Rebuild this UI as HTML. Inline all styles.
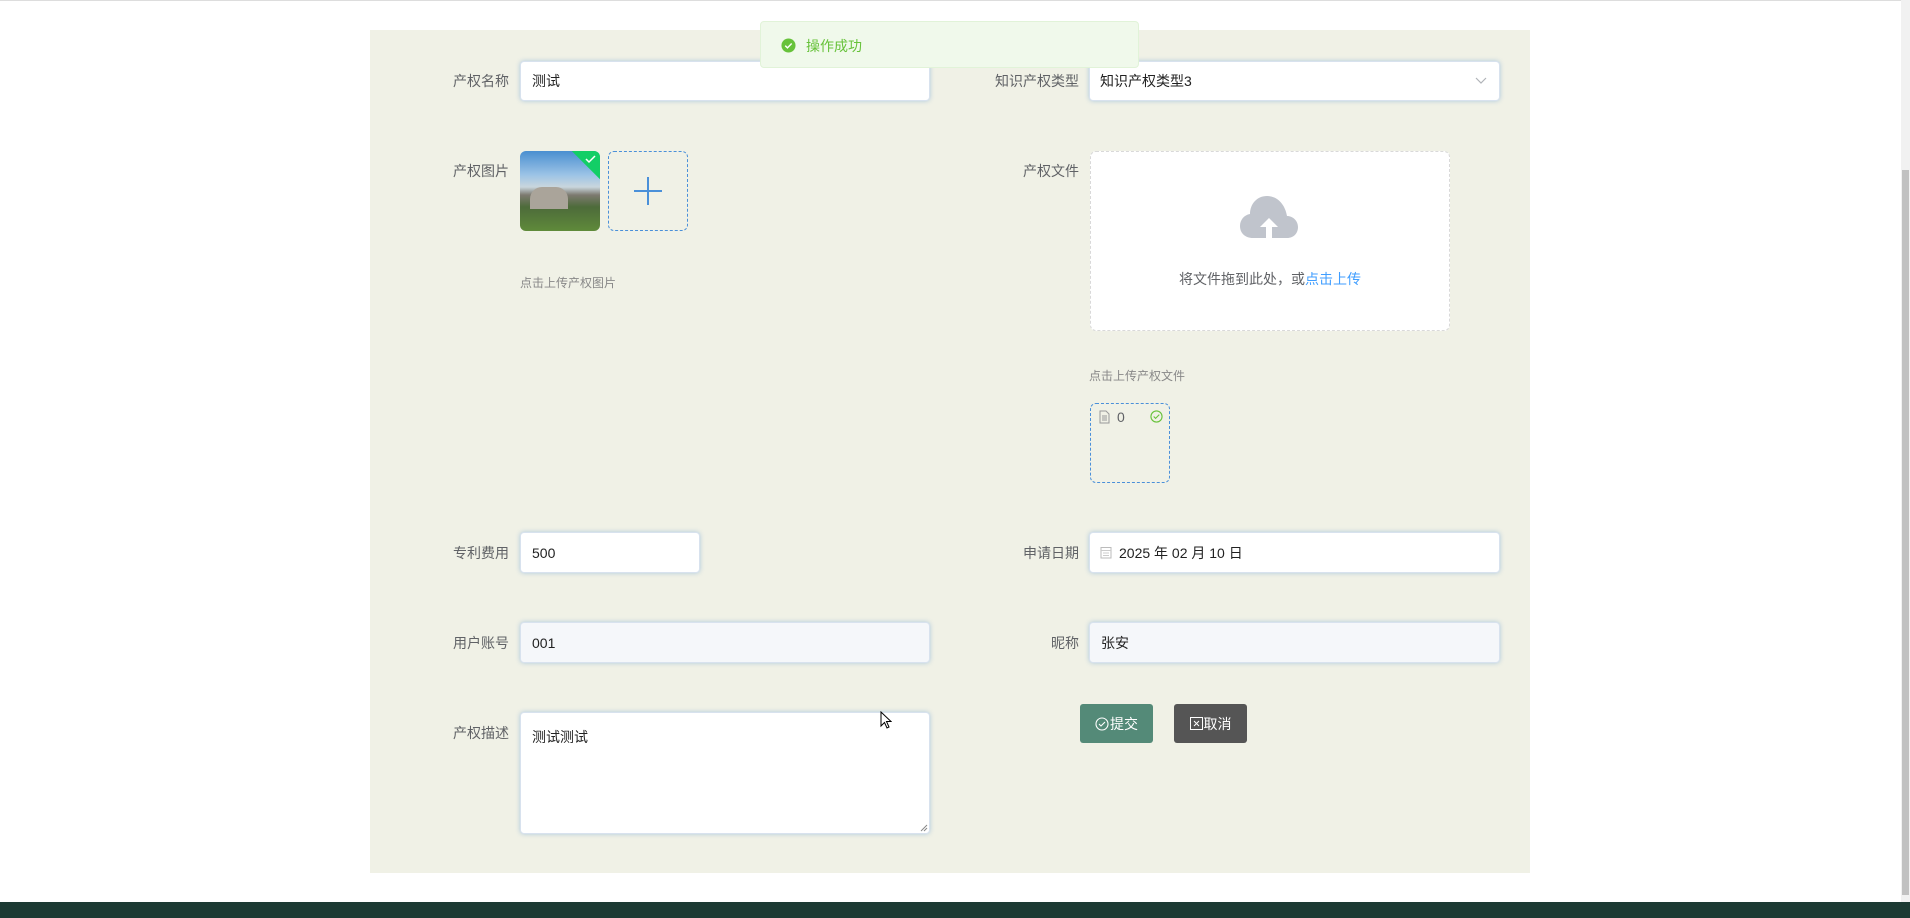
<!DOCTYPE html>
<html><head><meta charset="utf-8"><style>
*{box-sizing:border-box;margin:0;padding:0}
body{width:1910px;height:918px;overflow:hidden;background:#fff;font-family:"Liberation Sans","Noto Sans CJK SC",sans-serif;font-size:14px;color:#303133;position:relative}
.abs{position:absolute}
.panel{left:370px;top:30px;width:1160px;height:843px;background:#f0f1e6}
.lbl{color:#606266;font-size:14px;text-align:right;width:120px;line-height:20px}
.inp{background:#fff;border:1px solid #d8e2ee;border-radius:4px;box-shadow:0 0 5px rgba(90,150,210,.45);padding-left:11px;display:flex;align-items:center;font-size:14px;color:#222}
.dis{background:#f5f7fa}
.tip{font-size:12px;color:#888}
.dash{border:1px dashed #4a90d9;border-radius:6px}
.btn{color:#fff;border-radius:3px;display:flex;align-items:center;justify-content:center;font-size:14px}
</style></head><body>
<div class="abs" style="left:0;top:0;width:1910px;height:1px;background:#ddd"></div>
<div class="abs panel"></div>

<div class="abs lbl" style="left:389px;top:71px">产权名称</div>
<div class="abs inp" style="left:520px;top:61px;width:410px;height:40px">测试</div>
<div class="abs lbl" style="left:959px;top:71px">知识产权类型</div>
<div class="abs inp" style="left:1089px;top:61px;width:411px;height:40px;padding-left:10px">知识产权类型3
<svg class="abs" style="right:12px;top:15px" width="12" height="8" viewBox="0 0 12 8"><path d="M1 1l5 5 5-5" fill="none" stroke="#b0b3b8" stroke-width="1.2"/></svg></div>

<div class="abs" style="left:760px;top:21px;width:379px;height:47px;background:#f0f9eb;border:1px solid #e1f3d8;border-radius:4px"></div>
<svg class="abs" style="left:781px;top:38px" width="15" height="15" viewBox="0 0 16 16"><circle cx="8" cy="8" r="7.5" fill="#67c23a"/><path d="M4.5 8.2l2.4 2.3 4.5-4.6" fill="none" stroke="#fff" stroke-width="1.5"/></svg>
<div class="abs" style="left:806px;top:36px;color:#67c23a;font-size:14px">操作成功</div>

<div class="abs lbl" style="left:389px;top:161px">产权图片</div>
<div class="abs" style="left:520px;top:151px;width:80px;height:80px;border-radius:6px;overflow:hidden;background:linear-gradient(#4a8fd0 0%,#9cc3e6 30%,#c9d6dd 45%,#7d7a70 55%,#4d6b3a 70%,#5f8a3a 100%)">
<div class="abs" style="left:10px;top:36px;width:38px;height:22px;background:#aaa49a;border-radius:12px 12px 0 0"></div>
<div class="abs" style="right:-20px;top:-20px;width:40px;height:40px;background:#13ce66;transform:rotate(45deg)"></div>
<svg class="abs" style="right:3px;top:3px" width="12" height="10" viewBox="0 0 12 10"><path d="M1 5l3 3 6-6" fill="none" stroke="#fff" stroke-width="1.5"/></svg>
</div>
<div class="abs dash" style="left:608px;top:151px;width:80px;height:80px"></div>
<svg class="abs" style="left:633px;top:176px" width="30" height="30" viewBox="0 0 30 30"><path d="M15 1v28M1 15h28" stroke="#4a90d9" stroke-width="2"/></svg>
<div class="abs tip" style="left:520px;top:274px">点击上传产权图片</div>

<div class="abs lbl" style="left:959px;top:161px">产权文件</div>
<div class="abs" style="left:1090px;top:151px;width:360px;height:180px;background:#fff;border:1px dashed #d9d9d9;border-radius:6px"></div>
<svg class="abs" style="left:1239px;top:194px" width="60" height="46" viewBox="0 0 60 46"><path d="M14 44h34c7 0 11-5 11-11 0-6-5-11-11-11C46 10 38 2 28 2 18 2 11 10 11 20 5 21 1 26 1 32c0 7 5 12 13 12z" fill="#c0c4cc"/><path d="M30 24l-9 9h6v11h6V33h6z" fill="#fff"/></svg>
<div class="abs" style="left:1090px;top:269px;width:360px;text-align:center;font-size:14px;color:#606266">将文件拖到此处，或<span style="color:#409eff">点击上传</span></div>
<div class="abs tip" style="left:1089px;top:367px">点击上传产权文件</div>
<div class="abs dash" style="left:1090px;top:403px;width:80px;height:80px"></div>
<svg class="abs" style="left:1099px;top:410px" width="11" height="14" viewBox="0 0 11 14"><path d="M1 1h6l3 3v9H1z M3 6h5M3 8h5M3 10h5" fill="none" stroke="#999" stroke-width="1"/></svg>
<div class="abs" style="left:1117px;top:409px;font-size:14px;color:#606266">0</div>
<svg class="abs" style="left:1150px;top:410px" width="13" height="13" viewBox="0 0 14 14"><circle cx="7" cy="7" r="6" fill="none" stroke="#67c23a" stroke-width="1.2"/><path d="M4 7l2 2 4-4" fill="none" stroke="#67c23a" stroke-width="1.2"/></svg>

<div class="abs lbl" style="left:389px;top:543px">专利费用</div>
<div class="abs inp" style="left:520px;top:532px;width:180px;height:41px">500</div>
<div class="abs lbl" style="left:959px;top:543px">申请日期</div>
<div class="abs inp" style="left:1089px;top:532px;width:411px;height:41px;padding-left:10px"><svg width="12" height="13" viewBox="0 0 12 13" style="margin-right:7px"><rect x="1" y="1.5" width="10" height="10.5" fill="none" stroke="#bbb"/><path d="M1 4.5h10M3 7h6M3 9.5h6" stroke="#ccc"/></svg>2025 年 02 月 10 日</div>

<div class="abs lbl" style="left:389px;top:633px">用户账号</div>
<div class="abs inp dis" style="left:520px;top:622px;width:410px;height:41px">001</div>
<div class="abs lbl" style="left:959px;top:633px">昵称</div>
<div class="abs inp dis" style="left:1089px;top:622px;width:411px;height:41px">张安</div>

<div class="abs lbl" style="left:389px;top:723px">产权描述</div>
<div class="abs inp" style="left:520px;top:712px;width:410px;height:122px;align-items:flex-start;padding-top:14px">测试测试</div>
<svg class="abs" style="left:920px;top:824px" width="8" height="8" viewBox="0 0 8 8"><path d="M7 1L1 7M7 4L4 7" stroke="#888"/></svg>
<div class="abs btn" style="left:1080px;top:704px;width:73px;height:39px;background:#548a78"><svg width="14" height="14" viewBox="0 0 14 14" style="margin-right:1px"><circle cx="7" cy="7" r="6" fill="none" stroke="#fff" stroke-width="1.1"/><path d="M4 7l2 2 4-4" fill="none" stroke="#fff" stroke-width="1.1"/></svg>提交</div>
<div class="abs btn" style="left:1174px;top:704px;width:73px;height:39px;background:#555"><svg width="13" height="13" viewBox="0 0 13 13" style="margin-right:1px"><rect x="0.5" y="0.5" width="12" height="12" fill="none" stroke="#fff"/><path d="M4 4l5 5M9 4l-5 5" stroke="#fff"/></svg>取消</div>

<svg class="abs" style="left:880px;top:711px" width="12" height="18" viewBox="0 0 12 18"><path d="M1 1v14l3.5-3.5 2.5 5.5 2-1-2.5-5.5H11z" fill="#fff" stroke="#000"/></svg>

<div class="abs" style="left:1901px;top:0;width:9px;height:902px;background:#f1f1f1"></div>
<div class="abs" style="left:1902px;top:170px;width:7px;height:725px;background:#c1c1c1"></div>
<div class="abs" style="left:0;top:902px;width:1910px;height:16px;background:#1c3a33"></div>
</body></html>
